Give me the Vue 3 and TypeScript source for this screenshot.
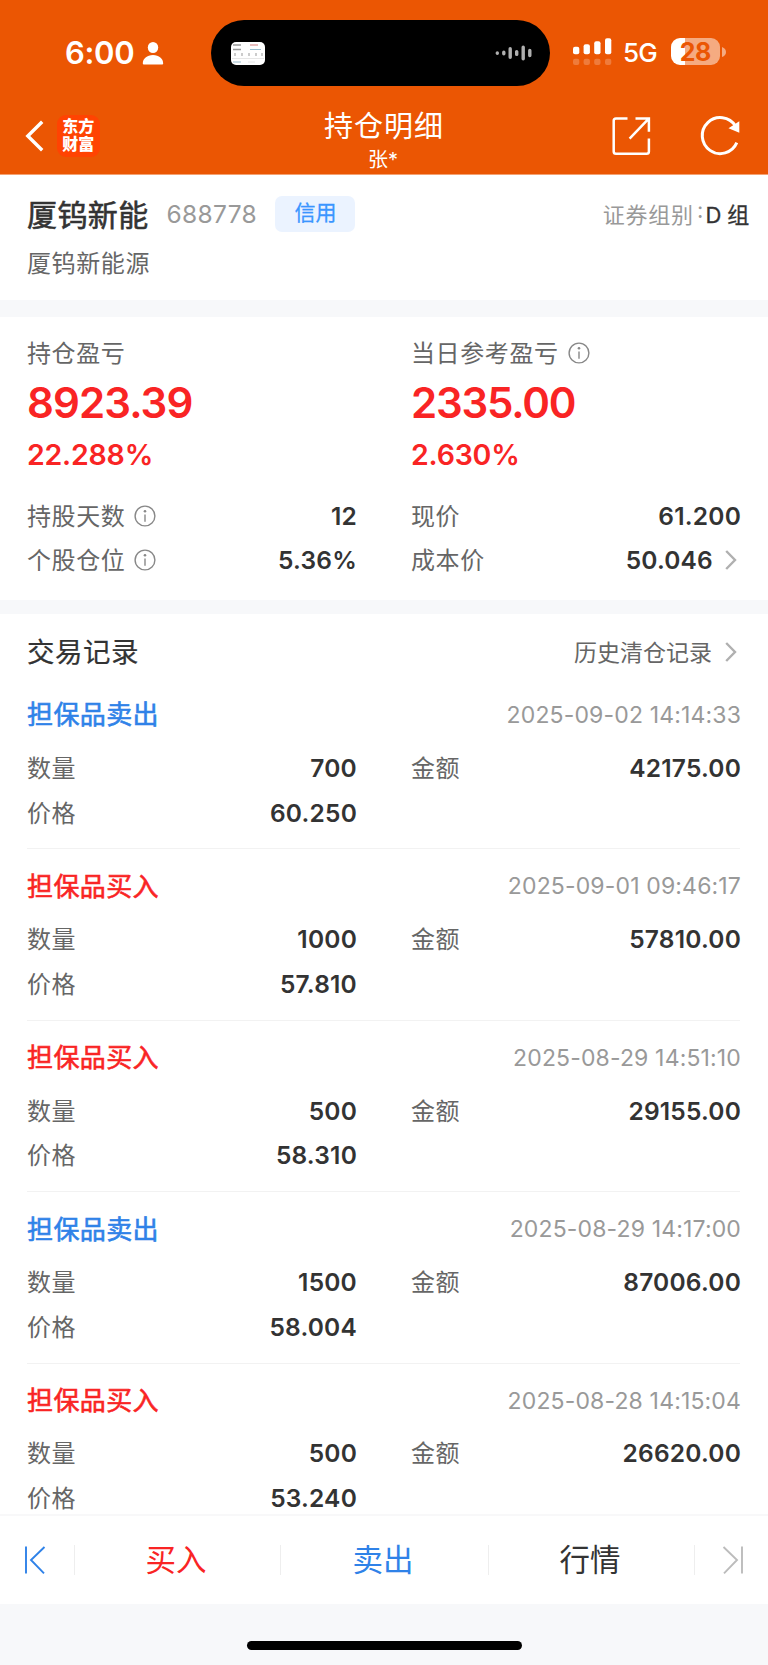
<script setup lang="ts">
interface TradeRecord {
  side: 'buy' | 'sell'
  time: string
  quantity: string
  amount: string
  price: string
}

const records: TradeRecord[] = [
  { side: 'sell', time: '2025-09-02 14:14:33', quantity: '700', amount: '42175.00', price: '60.250' },
  { side: 'buy', time: '2025-09-01 09:46:17', quantity: '1000', amount: '57810.00', price: '57.810' },
  { side: 'buy', time: '2025-08-29 14:51:10', quantity: '500', amount: '29155.00', price: '58.310' },
  { side: 'sell', time: '2025-08-29 14:17:00', quantity: '1500', amount: '87006.00', price: '58.004' },
  { side: 'buy', time: '2025-08-28 14:15:04', quantity: '500', amount: '26620.00', price: '53.240' },
]

const sideLabel = { buy: '担保品买入', sell: '担保品卖出' }
</script>

<template>
  <div class="screen">
    <header class="header">
      <div class="status">
        <div class="clock">
          <span class="clock-time">6:00</span>
          <svg width="22" height="24" viewBox="0 0 22 24" fill="#fff">
            <ellipse cx="11" cy="6.5" rx="5.2" ry="5.6" />
            <path d="M.8 22.6C.8 17.5 5 14 11 14s10.200 3.500 10.200 8.600q0 .9-1 .9H1.800q-1 0-1-.9z" />
          </svg>
        </div>
        <div class="island">
          <svg width="34" height="23" viewBox="0 0 34 23">
            <rect width="34" height="23" rx="5" fill="#fff" />
            <path d="M2 3h8M2 7.500h8" stroke="#999" stroke-width="1.300" />
            <path d="M19 3h8" stroke="#d99" stroke-width="1.300" />
            <path d="M19 7.500h11M2 20h8" stroke="#9bc" stroke-width="1.200" />
            <path d="M3 12.500h2m5 0h2m5 0h2m5 0h2m4 0h2" stroke="#ccc" stroke-width="3" />
            <path d="M1 16.500h32M17 20h7" stroke="#e6e6e6" stroke-width="1" />
          </svg>
          <svg width="38" height="18" viewBox="0 0 38 18" stroke="#b0b0b0" stroke-width="3.400" stroke-linecap="round">
            <path d="M2.300 9v.2M8.800 8.300v1.400M15.200 4.700v8.600M21.700 7.600v2.800M28.200 3.300v11.400M34.800 6.400v5.200" />
          </svg>
        </div>
        <div class="signals">
          <svg width="40" height="28" viewBox="0 0 40 28" fill="#fff">
            <rect x="1" y="8.700" width="6.300" height="7.600" rx="2" />
            <rect x="11.600" y="6.300" width="6.300" height="10" rx="2" />
            <rect x="22.200" y="3.300" width="6.300" height="13" rx="2" />
            <rect x="33" y=".3" width="6.300" height="16" rx="2" />
            <g opacity=".22">
              <rect x="1" y="20.700" width="6.300" height="6.300" rx="2" />
              <rect x="11.600" y="20.700" width="6.300" height="6.300" rx="2" />
              <rect x="22.200" y="20.700" width="6.300" height="6.300" rx="2" />
              <rect x="33" y="20.700" width="6.300" height="6.300" rx="2" />
            </g>
          </svg>
          <span class="network">5G</span>
          <div class="battery"><span>28</span></div>
          <svg class="nub" width="4" height="10" viewBox="0 0 4 10"><path d="M0 0q4 1.500 4 5t-4 5z" fill="#fff" opacity=".5" /></svg>
        </div>
      </div>
      <div class="nav">
        <div class="nav-left">
          <svg width="19" height="32" viewBox="0 0 19 32" fill="none" stroke="#fff" stroke-width="3.400">
            <path d="M17.200 1.700L2.800 16l14.400 14.300" />
          </svg>
          <div class="logo"><span>东方</span><span>财富</span></div>
        </div>
        <div class="nav-title">
          <h1>持仓明细</h1>
          <p>张*</p>
        </div>
        <div class="nav-right">
          <svg width="40" height="40" viewBox="0 0 40 40" fill="none" stroke="#fff" stroke-width="2.500">
            <path d="M16.500 2.500H5q-2.300 0-2.300 2.300v30.600q0 2.300 2.300 2.300h30.600q2.300 0 2.300-2.300V22.500" />
            <path d="M24.500 2.500h13.400v13.300M37.500 2.900L18.600 22.600" />
          </svg>
          <svg width="44" height="42" viewBox="0 0 44 42" fill="none">
            <path d="M37.800 27.700A18 18 0 1 1 36.500 11" stroke="#fff" stroke-width="3" />
            <path d="M40.300 6.300v11.500L29.500 13.300z" fill="#fff" />
          </svg>
        </div>
      </div>
    </header>

    <section class="stock">
      <div class="stock-row">
        <span class="stock-name">厦钨新能</span>
        <span class="stock-code">688778</span>
        <span class="tag">信用</span>
        <span class="group">证券组别<i>:</i><b>D 组</b></span>
      </div>
      <div class="stock-full">厦钨新能源</div>
    </section>

    <section class="summary">
      <div class="col">
        <div class="label top">持仓盈亏</div>
        <div class="big">8923.39</div>
        <div class="pct">22.288%</div>
        <div class="line">
          <span class="label">持股天数</span>
          <svg class="info" viewBox="0 0 22 22"><circle cx="11" cy="11" r="9.900" /><path d="M11 9.500v7.300" /><circle class="dot" cx="11" cy="6.300" r="1.300" /></svg>
          <span class="value">12</span>
        </div>
        <div class="line">
          <span class="label">个股仓位</span>
          <svg class="info" viewBox="0 0 22 22"><circle cx="11" cy="11" r="9.900" /><path d="M11 9.500v7.300" /><circle class="dot" cx="11" cy="6.300" r="1.300" /></svg>
          <span class="value">5.36%</span>
        </div>
      </div>
      <div class="col">
        <div class="label top">当日参考盈亏
          <svg class="info" viewBox="0 0 22 22"><circle cx="11" cy="11" r="9.900" /><path d="M11 9.500v7.300" /><circle class="dot" cx="11" cy="6.300" r="1.300" /></svg>
        </div>
        <div class="big today">2335.00</div>
        <div class="pct">2.630%</div>
        <div class="line">
          <span class="label">现价</span>
          <span class="value">61.200</span>
        </div>
        <div class="line">
          <span class="label">成本价</span>
          <span class="value">50.046</span>
          <svg class="arrow" viewBox="0 0 12 20"><path d="M1.200 1l8.800 9-8.800 9" /></svg>
        </div>
      </div>
    </section>

    <section class="trades">
      <div class="trades-head">
        <h2>交易记录</h2>
        <span class="history">历史清仓记录</span>
        <svg class="arrow" viewBox="0 0 12 20"><path d="M1.200 1l8.800 9-8.800 9" /></svg>
      </div>
      <article v-for="record in records" :key="record.time" class="record">
        <div class="record-head">
          <span class="side" :class="record.side">{{ sideLabel[record.side] }}</span>
          <time>{{ record.time }}</time>
        </div>
        <div class="pair">
          <div class="line"><span class="label">数量</span><span class="value">{{ record.quantity }}</span></div>
          <div class="line"><span class="label">金额</span><span class="value">{{ record.amount }}</span></div>
          <div class="line"><span class="label">价格</span><span class="value">{{ record.price }}</span></div>
        </div>
      </article>
    </section>

    <footer class="footer">
      <div class="actions">
        <div class="edge first">
          <svg width="22" height="28" viewBox="0 0 22 28" fill="none" stroke="#2f82e8" stroke-width="1.900"><path d="M2 .5v27M20.500 1L7 14l13 13.300" /></svg>
        </div>
        <div class="action buy">买入</div>
        <div class="action sell">卖出</div>
        <div class="action">行情</div>
        <div class="edge last">
          <svg width="22" height="28" viewBox="0 0 22 28" fill="none" stroke="#bcbcbc" stroke-width="1.900"><path d="M20 .5v27M1.500 1L15 14 2 27.300" /></svg>
        </div>
      </div>
      <div class="home-bar"></div>
    </footer>
  </div>
</template>

<style>
body {
  margin: 0;
  background: #fff;
}
</style>

<style scoped>
.screen {
  width: 768px;
  height: 1665px;
  overflow: hidden;
  display: flex;
  flex-direction: column;
  background: #fff;
  color: #333;
  font-family: Inter, "Noto Sans CJK SC", sans-serif;
}
.screen svg {
  display: block;
  flex: none;
}
h1, h2, p {
  margin: 0;
  font-weight: 400;
}
.header {
  flex: none;
  box-sizing: border-box;
  height: 175px;
  border-bottom: 1px solid #f4a172;
  background: #eb5603;
  color: #fff;
}
.status {
  display: flex;
  align-items: center;
  height: 106px;
}
.clock {
  display: flex;
  align-items: center;
  gap: 9px;
  width: 146px;
  padding-left: 65px;
  margin-top: -1px;
}
.clock-time {
  width: 68px;
  font-size: 31px;
  font-weight: 600;
  letter-spacing: -0.300px;
  white-space: nowrap;
}
.island {
  box-sizing: border-box;
  display: flex;
  align-items: center;
  justify-content: space-between;
  width: 338.500px;
  height: 66px;
  padding: 0 17px 0 20px;
  border-radius: 33px;
  background: #000;
}
.signals {
  display: flex;
  align-items: center;
  padding-left: 22px;
  margin-top: -3px;
}
.network {
  width: 34px;
  margin: 2px 13.500px 0 11.500px;
  font-size: 26px;
  font-weight: 500;
  letter-spacing: -0.800px;
}
.battery {
  width: 49.500px;
  height: 27px;
  border-radius: 9px;
  background: linear-gradient(90deg, #fff 14px, #f5ab81 14px);
  color: #eb5603;
  font-size: 25px;
  font-weight: 700;
  line-height: 28px;
  letter-spacing: -0.500px;
  text-align: center;
}
.nub {
  margin-left: 1.500px;
}
.nav {
  display: grid;
  grid-template-columns: 1fr auto 1fr;
  height: 68px;
}
.nav-left {
  display: flex;
  align-items: center;
  gap: 13px;
  height: 59px;
  padding-left: 25px;
}
.logo {
  box-sizing: border-box;
  display: flex;
  flex-direction: column;
  justify-content: center;
  width: 42.500px;
  height: 42px;
  padding-bottom: 2px;
  border-radius: 9px;
  background: #ff4302;
  font-size: 16px;
  font-weight: 900;
  line-height: 18px;
  text-align: center;
}
.nav-title {
  padding-top: 2px;
  text-align: center;
}
.nav-title h1 {
  height: 38px;
  font-size: 29px;
  line-height: 38px;
  letter-spacing: 1px;
}
.nav-title p {
  padding-right: 2px;
  font-size: 20px;
  line-height: 28px;
}
.nav-right {
  display: flex;
  align-items: center;
  justify-content: flex-end;
  gap: 48px;
  height: 59px;
  padding-right: 25px;
}
.stock {
  flex: none;
  box-sizing: border-box;
  height: 124.800px;
  padding: 16px 19px 0 27px;
}
.stock-row {
  display: flex;
  align-items: center;
  height: 46px;
}
.stock-name {
  padding-bottom: 3px;
  font-size: 30px;
  letter-spacing: 0.400px;
  -webkit-text-stroke: 0.600px currentColor;
}
.stock-code {
  margin-left: 18px;
  color: #999;
  font-size: 24.500px;
  letter-spacing: 0.300px;
}
.tag {
  width: 80px;
  height: 36px;
  margin-left: 18.500px;
  border-radius: 7px;
  background: #ebf3ff;
  color: #3a95ff;
  font-size: 21px;
  line-height: 34px;
  text-align: center;
  -webkit-text-stroke: 0.300px currentColor;
}
.group {
  display: flex;
  margin-left: auto;
  padding-bottom: 2px;
  color: #999;
  font-size: 22px;
  letter-spacing: 0.800px;
}
.group i {
  margin: 0 1.500px 0 3px;
  font-style: normal;
}
.group b {
  color: #333;
  font-weight: 400;
  letter-spacing: -0.200px;
  -webkit-text-stroke: 0.300px currentColor;
}
.stock-full {
  margin-top: 9px;
  color: #666;
  font-size: 24px;
  line-height: 36px;
  letter-spacing: 0.600px;
}
.summary {
  flex: none;
  box-sizing: border-box;
  display: grid;
  grid-template-columns: 329px 329px;
  column-gap: 55px;
  height: 313.900px;
  padding: 17px 0 0 27px;
  border-top: 17.400px solid #f7f8fa;
  border-bottom: 14px solid #f7f8fa;
}
.label {
  padding-bottom: 2px;
  color: #666;
  font-size: 24px;
  letter-spacing: 0.600px;
}
.top {
  box-sizing: border-box;
  display: flex;
  align-items: center;
  gap: 9px;
  height: 38px;
}
.top .info {
  margin-top: 2px;
}
.info {
  width: 22px;
  height: 22px;
  fill: none;
  stroke: #888;
  stroke-width: 1.400;
}
.info .dot {
  fill: #888;
  stroke: none;
}
.line .info {
  margin-top: 1px;
  margin-left: 9px;
}
.big {
  height: 62px;
  color: #f92424;
  font-size: 42px;
  font-weight: 600;
  line-height: 62px;
  letter-spacing: -0.900px;
}
.today {
  letter-spacing: -1.200px;
}
.pct {
  height: 42px;
  margin-bottom: 17px;
  color: #f92424;
  font-size: 28.500px;
  font-weight: 600;
  line-height: 42px;
  letter-spacing: -0.200px;
}
.line {
  display: flex;
  align-items: center;
  height: 44.700px;
}
.value {
  margin-right: -1px;
  margin-left: auto;
  padding-top: 1px;
  color: #333;
  font-size: 24.500px;
  font-weight: 600;
  letter-spacing: 0.200px;
}
.arrow {
  width: 12px;
  height: 20px;
  margin: 0 3px 0 13px;
  fill: none;
  stroke: #b0b0b0;
  stroke-width: 2.400;
}
.trades {
  flex: none;
  box-sizing: border-box;
  height: 900.300px;
  overflow: hidden;
  padding: 13px 28px 0 27px;
}
.trades-head {
  display: flex;
  align-items: center;
  height: 51.300px;
}
.trades-head h2 {
  padding-bottom: 4px;
  font-size: 27.500px;
  letter-spacing: 0.500px;
  -webkit-text-stroke: 0.200px currentColor;
}
.history {
  margin-left: auto;
  padding-bottom: 2px;
  color: #666;
  font-size: 23px;
}
.record {
  box-sizing: border-box;
  height: 171.400px;
  padding-top: 14px;
  border-bottom: 1px solid #f2f2f2;
}
.record-head {
  display: flex;
  align-items: center;
  justify-content: space-between;
  height: 45px;
  margin-right: -1px;
  margin-bottom: 8px;
}
.side {
  padding-bottom: 3px;
  font-size: 26px;
  letter-spacing: 0.400px;
  -webkit-text-stroke: 0.600px currentColor;
}
.sell {
  color: #2f82e8;
}
.buy {
  color: #f92424;
}
time {
  padding-top: 1px;
  color: #999;
  font-size: 23px;
  letter-spacing: 0.150px;
}
.pair {
  display: grid;
  grid-template-columns: 329px 329px;
  column-gap: 55px;
}
.footer {
  flex: 1;
  background: #f7f8fa;
}
.actions {
  box-sizing: border-box;
  display: grid;
  grid-template-columns: 74px 206px 208px 206px 74px;
  align-items: center;
  height: 90px;
  border-top: 2px solid #f8f8f9;
  background: #fff;
}
.edge {
  box-sizing: border-box;
  display: flex;
  align-items: center;
  height: 30px;
  padding-left: 24px;
}
.edge.last {
  padding-left: 27px;
}
.action {
  box-sizing: border-box;
  height: 30px;
  padding-right: 3px;
  border-left: 1px solid #eee;
  font-size: 30.500px;
  line-height: 29px;
  text-align: center;
}
.last {
  border-left: 1px solid #eee;
}
.home-bar {
  width: 275px;
  height: 9.500px;
  margin: 37px auto 0;
  border-radius: 5px;
  background: #000;
}
</style>
